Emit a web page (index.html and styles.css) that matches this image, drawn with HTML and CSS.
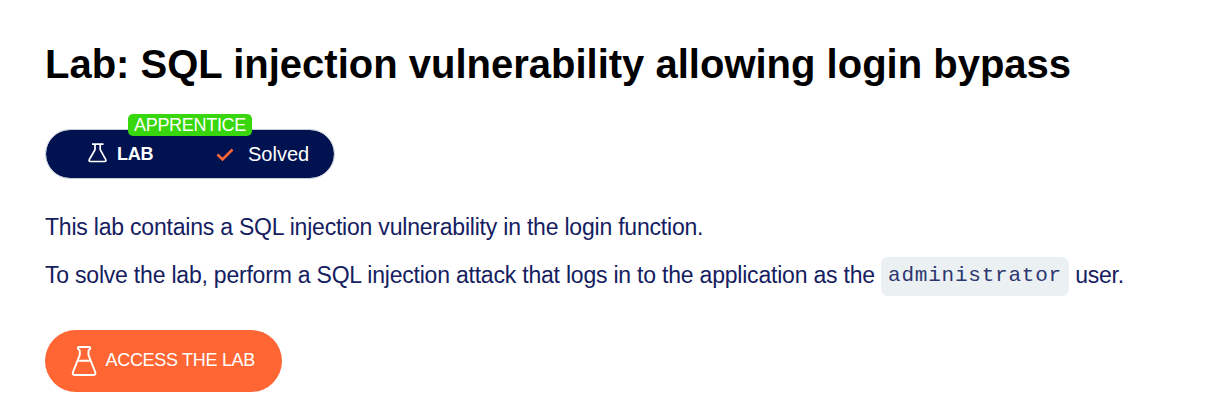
FILE: index.html
```html
<!DOCTYPE html>
<html lang="en">
<head>
<meta charset="utf-8">
<title>Lab: SQL injection vulnerability allowing login bypass</title>
<link rel="stylesheet" href="styles.css">
</head>
<body>
<main class="page">
<h1 class="title">Lab: SQL injection vulnerability allowing login bypass</h1>
<div class="status">
<span class="level">APPRENTICE</span>
<svg class="flask-small" viewBox="0 0 19 20" fill="none" stroke="#fff" stroke-width="1.7" stroke-linejoin="round"><path d="M4 1.200h11.500M7 1.200v5.500L1.500 16.200Q.300 18.500 2.500 18.500h14Q18.700 18.500 17.500 16.200L12.200 6.700V1.200"/></svg>
<span class="lab">LAB</span>
<svg class="check" viewBox="0 0 18 14" fill="none" stroke="#ff6633" stroke-width="2.600"><path d="M1.500 6.500l5 5L16.500 1.500"/></svg>
<span class="solved">Solved</span>
</div>
<p class="text first">This lab contains a SQL injection vulnerability in the login function.</p>
<p class="text">To solve the lab, perform a SQL injection attack that logs in to the application as the <code class="code">administrator</code> user.</p>
<a class="button"><svg class="flask" viewBox="0 0 26 30" fill="none" stroke="#fff" stroke-width="2" stroke-linejoin="round" stroke-linecap="round"><path d="M8 1h10q1.500 0 1.200 1.500L17.500 4.800V9L24.200 26q1 3-2 3H4q-3 0-2-3L8.800 9V4.800L7 2.500Q6.700 1 8 1ZM6.800 14.800h13"/></svg><span class="button-label">ACCESS THE LAB</span></a>
</main>
</body>
</html>
```
FILE: styles.css
```css
* { box-sizing: border-box; }
body { margin: 0; background: #fff; font-family: "Liberation Sans", Arial, sans-serif; color: #14205f; }
.page { padding: 40px 0 0 45px; width: 1218px; height: 405px; overflow: hidden; }
.title { margin: 0 0 40px; font-size: 40px; line-height: 49px; color: #000; white-space: nowrap; }
.status { position: relative; display: flex; align-items: center; width: 290px; height: 50px; padding-left: 42px; border: 1px solid #c5ccd6; border-radius: 25px; background: #001350; background-clip: padding-box; color: #fff; }
.level { position: absolute; left: 82px; top: -16px; width: 124px; height: 22px; border-radius: 5px; background: #38d60c; font-size: 18px; line-height: 22px; text-align: center; letter-spacing: -0.3px; }
.flask-small { width: 19px; height: 20px; margin-top: -3px; }
.lab { margin-left: 10px; width: 36px; font-size: 18px; font-weight: bold; letter-spacing: -0.3px; }
.check { margin: 2px 0 0 63px; width: 18px; height: 14px; }
.solved { margin-left: 14px; font-size: 20px; }
.text { margin: 0; font-size: 23px; line-height: 48px; height: 48px; white-space: nowrap; letter-spacing: -0.21px; }
.first { margin-top: 24px; }
.code { display: inline-block; position: relative; top: -2px; height: 39px; padding: 0 7px; border-radius: 7px; background: #ebf0f3; color: #2c376f; font-family: "Liberation Mono", "Courier New", monospace; font-size: 21px; line-height: 37px; letter-spacing: 0.78px; }
.button { display: flex; align-items: center; width: 237px; height: 62px; margin-top: 31px; padding-left: 26px; border-radius: 31px; background: #f63; color: #fff; }
.flask { width: 26px; height: 30px; }
.button-label { margin: -2px 0 0 8.5px; font-size: 18px; white-space: nowrap; letter-spacing: -0.3px; }
```
